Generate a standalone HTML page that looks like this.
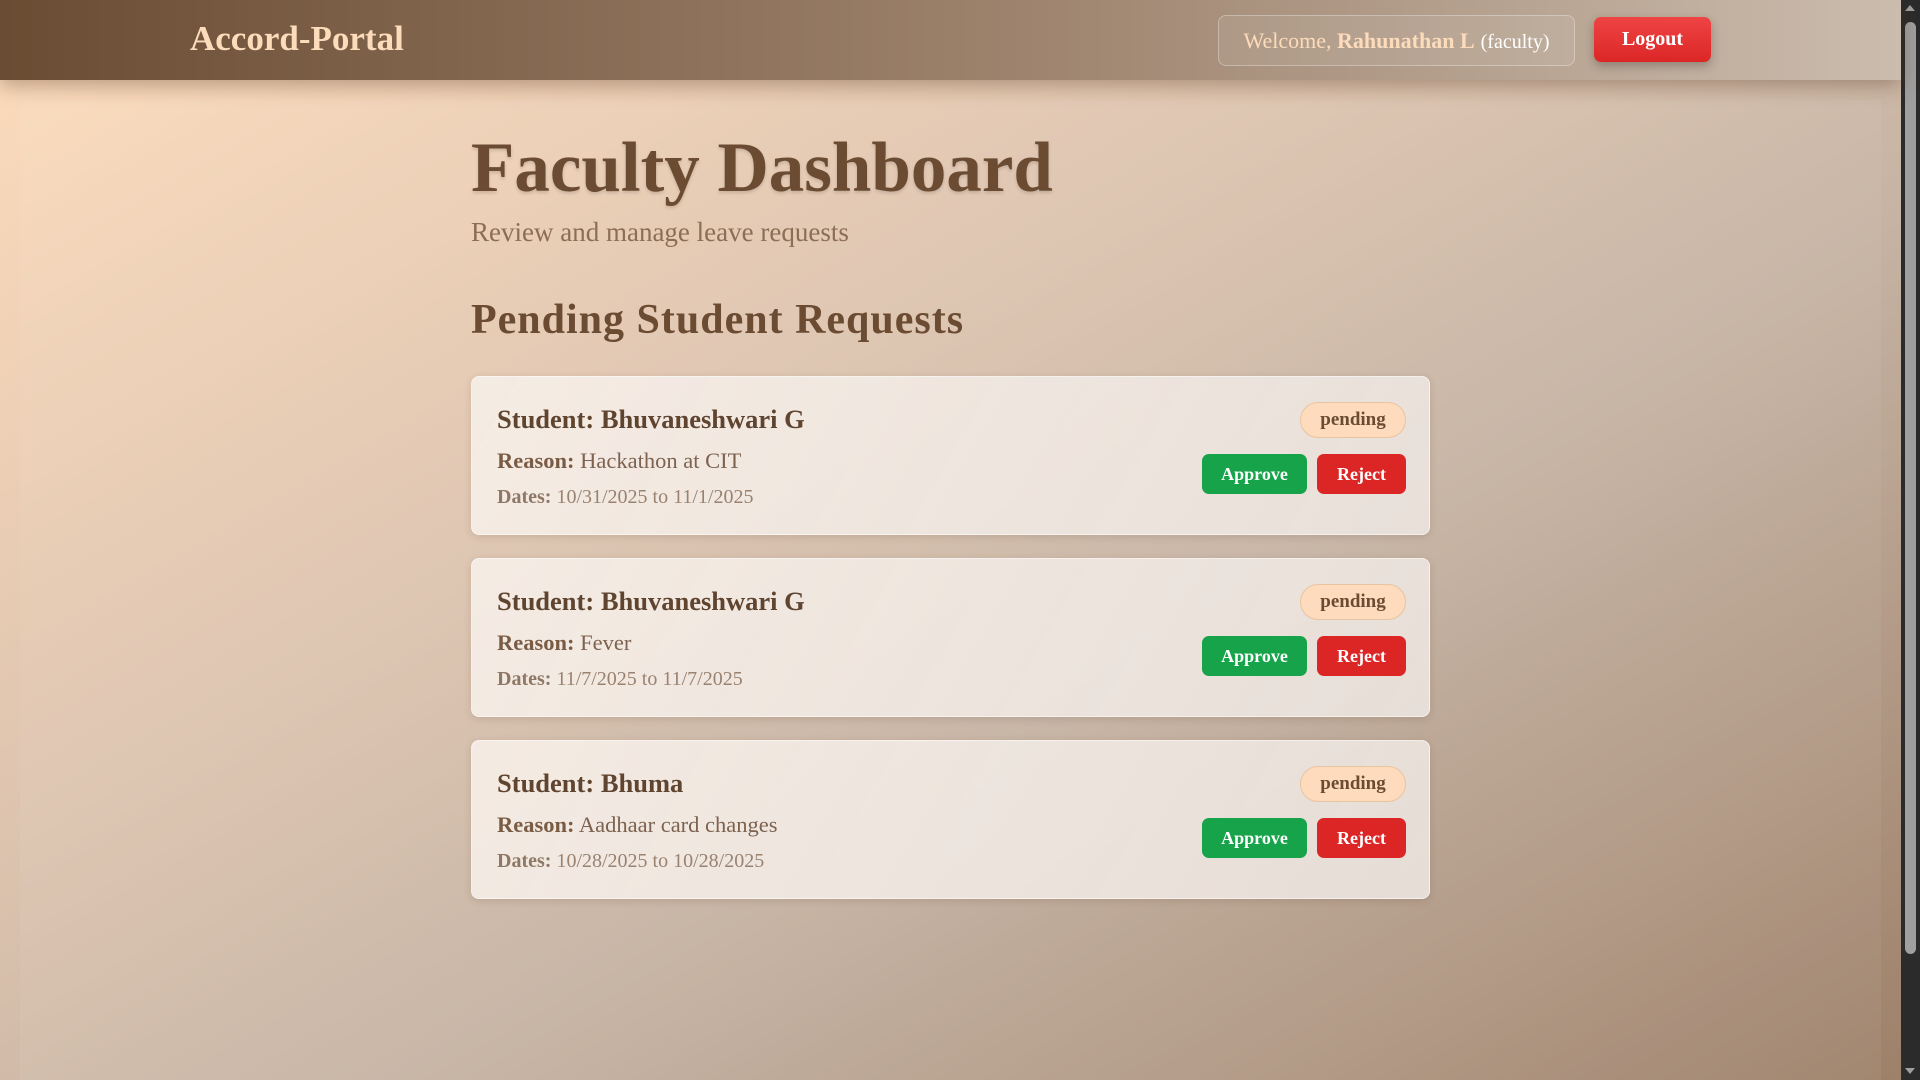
<!DOCTYPE html>
<html><head><meta charset="utf-8"><style>
*{margin:0;padding:0;box-sizing:border-box}
html,body{width:1920px;height:1080px;overflow:hidden}
body{font-family:"Liberation Serif",serif;background:linear-gradient(150deg,#fedcbc 0%,#e0c6b0 35%,#c6b3a3 60%,#9d8068 100%);position:relative}
.hdr{position:absolute;left:0;top:0;width:1901px;height:80px;background:linear-gradient(90deg,#6a4c33 0%,#9a7f69 50%,#cbbcad 100%);box-shadow:0 6px 18px rgba(80,50,30,.35);z-index:2}
.logo{position:absolute;left:190px;top:19px;font-size:35px;font-weight:bold;color:#fddcbc}
.wel{position:absolute;left:1218px;top:15px;width:357px;height:51px;border:1px solid rgba(255,255,255,.3);border-radius:8px;background:rgba(255,255,255,.08);color:#fddcbc;font-size:22px;line-height:49px;text-align:center;white-space:nowrap}
.wel b{font-weight:bold}
.wel span{color:#fff;font-size:20px;margin-left:6px}
.lo{position:absolute;left:1594px;top:17px;width:117px;height:45px;border-radius:7px;background:linear-gradient(#ef4444,#dc2626);color:#fff;font-weight:bold;font-size:20px;line-height:45px;text-align:center;box-shadow:0 4px 10px rgba(0,0,0,.25)}
.panel{position:absolute;left:20px;top:100px;width:1861px;height:980px;background:rgba(255,255,255,.05)}
h1{position:absolute;left:471px;top:128px;font-size:71px;font-weight:bold;color:#6b4c32;text-shadow:0 2px 3px rgba(0,0,0,.15);white-space:nowrap}
.sub{position:absolute;left:471px;top:217px;font-size:27px;color:#8c6e55}
h2{position:absolute;left:471px;top:296px;font-size:42px;letter-spacing:1px;font-weight:bold;color:#6b4c32;white-space:nowrap}
.card{position:absolute;left:471px;width:959px;height:159px;border-radius:8px;background:linear-gradient(120deg,rgba(246,238,231,.92),rgba(236,229,224,.88));box-shadow:0 2px 8px rgba(80,50,30,.15);border:1px solid rgba(255,255,255,.5)}
.st{position:absolute;left:25px;top:27px;font-size:26.5px;font-weight:bold;color:#5f4430}
.re{position:absolute;left:25px;top:71px;font-size:22.5px;color:#7d6250}
.re b{color:#7a5c45}
.da{position:absolute;left:25px;top:109px;font-size:20px;color:#9a8270}
.da b{color:#8f7765}
.pe{position:absolute;left:828px;top:25px;width:106px;height:36px;border-radius:18px;background:#fedbbd;border:1px solid #e8c4a0;color:#6b4c32;font-weight:bold;font-size:19px;line-height:33px;text-align:center}
.ap,.rj{position:absolute;top:77px;height:40px;border-radius:7px;color:#fff;font-size:18px;line-height:40px;text-align:center;font-weight:bold}
.ap{left:730px;width:105px;background:#17a34a}
.rj{left:845px;width:89px;background:#dc2626}
.sb{position:absolute;left:1901px;top:0;width:19px;height:1080px;background:#2b2b2b}
.th{position:absolute;left:1905px;top:22px;width:11px;height:932px;border-radius:6px;background:#9f9f9f}
</style></head><body>
<div class="panel"></div>
<div class="hdr"><div class="logo">Accord-Portal</div>
<div class="wel">Welcome, <b>Rahunathan L</b><span>(faculty)</span></div>
<div class="lo">Logout</div></div>
<h1>Faculty Dashboard</h1>
<div class="sub">Review and manage leave requests</div>
<h2>Pending Student Requests</h2>
<div class="card" style="top:376px"><div class="st">Student: Bhuvaneshwari G</div><div class="re"><b>Reason:</b> Hackathon at CIT</div><div class="da"><b>Dates:</b> 10/31/2025 to 11/1/2025</div><div class="pe">pending</div><div class="ap">Approve</div><div class="rj">Reject</div></div>
<div class="card" style="top:558px"><div class="st">Student: Bhuvaneshwari G</div><div class="re"><b>Reason:</b> Fever</div><div class="da"><b>Dates:</b> 11/7/2025 to 11/7/2025</div><div class="pe">pending</div><div class="ap">Approve</div><div class="rj">Reject</div></div>
<div class="card" style="top:740px"><div class="st">Student: Bhuma</div><div class="re"><b>Reason:</b> Aadhaar card changes</div><div class="da"><b>Dates:</b> 10/28/2025 to 10/28/2025</div><div class="pe">pending</div><div class="ap">Approve</div><div class="rj">Reject</div></div>
<div class="sb"></div><div class="th"></div>
<div style="position:absolute;left:1905px;top:5px;width:0;height:0;border-left:5px solid transparent;border-right:5px solid transparent;border-bottom:6px solid #9f9f9f"></div>
<div style="position:absolute;left:1905px;top:1068px;width:0;height:0;border-left:5px solid transparent;border-right:5px solid transparent;border-top:6px solid #9f9f9f"></div>
</body></html>
